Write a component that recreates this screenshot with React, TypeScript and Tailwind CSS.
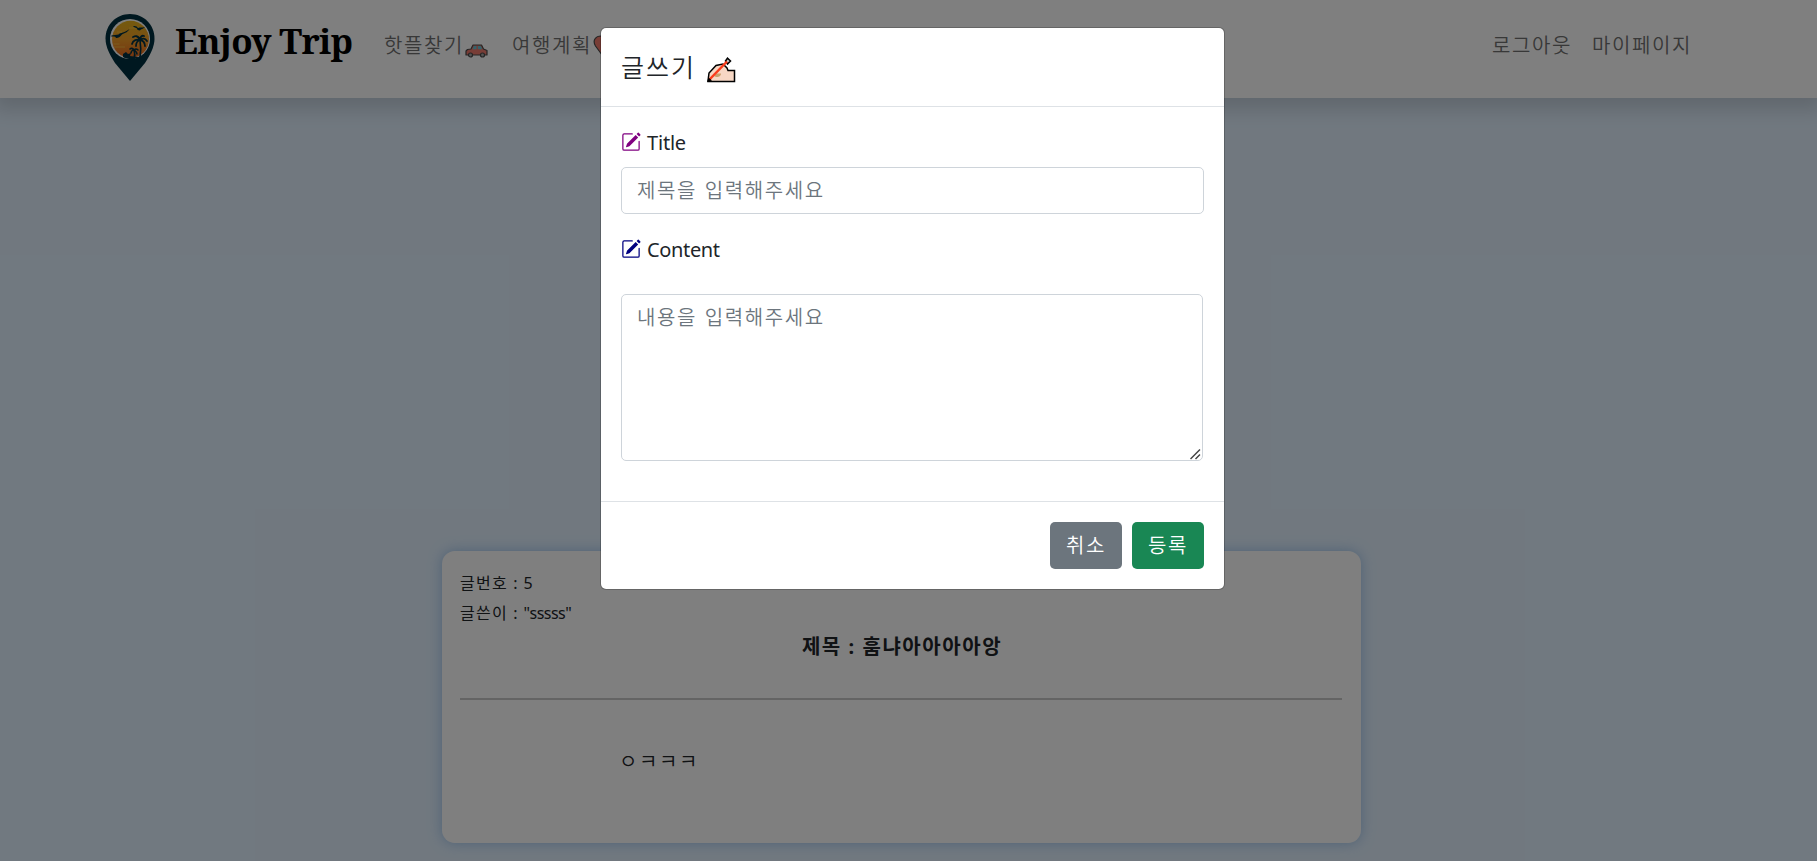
import React from "react";

const sans = "font-['Noto_Sans','Noto_Sans_CJK_KR',sans-serif]";

function Logo() {
  return (
    <svg width="50" height="67" viewBox="0 0 50 67" className="mt-[14px] shrink-0">
      <defs>
        <linearGradient id="sun" x1="0" y1="0" x2="0" y2="1">
          <stop offset="0" stopColor="#e8b41c" />
          <stop offset="0.5" stopColor="#f5a028" />
          <stop offset="1" stopColor="#ee6a20" />
        </linearGradient>
      </defs>
      <path d="M25 0C11 0 .5 11 .5 24.500C.5 33 5 41 10 49L25 67L40 49C45 41 49.500 33 49.500 24.500C49.500 11 39 0 25 0Z" fill="#003040" />
      <circle cx="25" cy="25" r="20" fill="#fff" />
      <circle cx="25.500" cy="25.300" r="18.500" fill="url(#sun)" />
      <path d="M9 33h11M8.500 30h6M24 14h12M12 18h5" stroke="#fbd34f" strokeWidth="1" opacity=".6" />
      <path d="M5.500 22c3-1.500 6-1 8-1.500c2-2 6-1.500 11-5.500c-2 4-6 4-8 6c-2 3-6 4-6 2c-2-1-3 0-5-1Z" fill="#003040" />
      <path d="M28 12.500c2-1 4 0 5 1.500c2-1 4 0 7-1c-2 2.500-4 1.500-5 3.500c-2 0-3-1-3-2c-1-1-3-1-4-2Z" fill="#003040" />
      <g fill="none" stroke="#003040" strokeLinecap="round">
        <path d="M35 26c1 6 1 12 0 18M29 36c1 3 1 6 0 9" strokeWidth="1.600" />
        <path d="M35 26c-2-5-5-4-7-3M35 26c-3-1-7 0-8 4M35 26c-3 1-4 4-4 6M35 26c0-3 2-5 4-4M35 26c2-2 5-2 7 1M35 26c3 0 5 3 5 6" strokeWidth="1.800" />
        <path d="M29 36c-1-2-3-2-4-1M29 36c-2 0-3 2-3 3M29 36c2-2 3-1 4 0M29 36c1 1 3 2 3 4" strokeWidth="1.600" />
      </g>
      <path d="M18 40l3-2l2 2l3-1l-1 3l8 1l3-1c-5 4-13 4-18 1Z" fill="#003040" />
    </svg>
  );
}

function Car() {
  return (
    <svg width="23" height="14" viewBox="0 0 23 14" className="mt-[9px] ml-[1px]">
      <path d="M1 7L2.500 5.500L6 5L8 1H16.500L18.500 5L22 6.500V11H1Z" fill="#f07a6c" stroke="#4a4a4a" strokeWidth="1.200" strokeLinejoin="round" />
      <path d="M7.500 5.300L9 2H11.500V5.300ZM12.800 2H15.800L17.300 5.300H12.800Z" fill="#6bc4d6" />
      <circle cx="5.500" cy="11" r="2" fill="#aaa" stroke="#4a4a4a" strokeWidth="1.200" />
      <circle cx="17.500" cy="11" r="2" fill="#aaa" stroke="#4a4a4a" strokeWidth="1.200" />
    </svg>
  );
}

function Pin() {
  return (
    <svg width="16" height="20" viewBox="0 0 16 20" className="-mt-[2px] ml-[1px]">
      <path d="M8 18.500L2.500 11C-1 5 3 1 8 1S17 5 13.500 11Z" fill="#f07a6c" stroke="#4a4a4a" strokeWidth="1.200" />
    </svg>
  );
}

function WritingHand() {
  return (
    <svg width="30" height="26" viewBox="0 0 30 26" className="mt-[5px] ml-[10px]">
      <path d="M2 24L3 16L10 8.500L17 7L21 11L22 13.500H28.500V24.500H2Z" fill="#f7d7c4" stroke="#000" strokeWidth="1.500" />
      <path d="M8 19l3-2.500h4c0 3-3 3.500-5 3.500Z" fill="#c9a06c" />
      <path d="M19.500 4L21.500 1.200L24.500 4L21.500 7Z" fill="#ccc" stroke="#000" strokeWidth="1.500" />
      <path d="M3 23L21 4.500" stroke="#fa3c1c" strokeWidth="2.500" />
      <path d="M1 25L2.500 20.500L6 23.500Z" fill="#000" />
    </svg>
  );
}

function PencilSquare({ className }: { className: string }) {
  return (
    <svg width="20" height="20" viewBox="0 0 16 16" fill="currentColor" className={className}>
      <path d="M15.502 1.940a.5.5 0 0 1 0 .706L14.459 3.690l-2-2L13.502.646a.5.5 0 0 1 .707 0l1.293 1.293zm-1.750 2.456-2-2L4.939 9.210a.5.5 0 0 0-.121.196l-.805 2.414a.25.25 0 0 0 .316.316l2.414-.805a.5.5 0 0 0 .196-.120l6.813-6.814z" />
      <path fillRule="evenodd" d="M1 13.500A1.500 1.500 0 0 0 2.500 15h11a1.500 1.500 0 0 0 1.500-1.500v-6a.5.5 0 0 0-1 0v6a.5.5 0 0 1-.5.5h-11a.5.5 0 0 1-.5-.5v-11a.5.5 0 0 1 .5-.5H9a.5.5 0 0 0 0-1H2.500A1.500 1.500 0 0 0 1 2.500z" />
    </svg>
  );
}

function Navbar() {
  return (
    <header className="relative flex h-[98px] items-start bg-white pr-[125px] pl-[105px] shadow-[0_6px_18px_6px_rgba(0,0,0,0.14)]">
      <Logo />
      <span className="mt-[17px] ml-[20px] w-[209px] font-['Noto_Serif','DejaVu_Serif_Condensed','DejaVu_Serif',serif] text-[35px] leading-[48px] font-bold tracking-[-0.700px] whitespace-nowrap text-black">
        Enjoy Trip
      </span>
      <nav className="mt-[31px] flex h-[30px] flex-1 items-center text-[20px] leading-[30px] font-[350] tracking-[1.600px] whitespace-nowrap text-[#707070]">
        <span className="flex w-[128px] items-center">핫플찾기<Car /></span>
        <span className="flex items-center">여행계획<Pin /></span>
        <span className="ml-auto">로그아웃</span>
        <span className="ml-[20px]">마이페이지</span>
      </nav>
    </header>
  );
}

function Post() {
  return (
    <article className="mt-[453px] ml-[442px] h-[292px] w-[919px] rounded-[13px] bg-white px-[18px] pt-[17px] text-[#212529] shadow-[0_0_13px_rgba(110,165,225,0.6)]">
      <div className="text-[16px] leading-[30px] tracking-[1.250px]">
        <p>글번호 <span className="tracking-[0.900px]">: 5</span></p>
        <p>글쓴이 <span className="tracking-[0.900px]">: </span><span className="tracking-[-0.550px]">"sssss"</span></p>
      </div>
      <h2 className="mt-[4px] ml-px text-center text-[20px] leading-[30px] font-bold tracking-[1.550px]">제목 : 훔냐아아아아앙</h2>
      <hr className="mt-[36px] mr-px h-[2px] border-0 bg-[#c8c8c8]" />
      <p className="mt-[47px] ml-[159px] text-[20px] leading-[30px] font-[350] tracking-[1.600px]">ㅇㅋㅋㅋ</p>
    </article>
  );
}

function WriteDialog() {
  return (
    <section role="dialog" className="h-[563px] w-[625px] rounded-[6px] border border-black/20 bg-white bg-clip-padding text-[20px] text-[#212529]">
      <header className="flex h-[79px] items-center border-b border-[#dee2e6] px-[20px]">
        <h5 className="text-[25px] leading-[38px] font-[350] tracking-[2px]">글쓰기</h5>
        <WritingHand />
      </header>
      <div className="h-[394px] px-[20px] pt-[20px]">
        <label className="flex h-[30px] items-center">
          <PencilSquare className="text-[#800080]" />
          <span className="mt-[2px] ml-[6px] tracking-[-0.200px]">Title</span>
        </label>
        <input className="mt-[10px] block h-[47px] w-full rounded-[5px] border border-[#ced4da] px-[15px] font-[350] tracking-[1.600px] [word-spacing:1px] outline-none placeholder:text-[#6c757d]" placeholder="제목을 입력해주세요" />
        <label className="mt-[20px] flex h-[30px] items-center">
          <PencilSquare className="text-[#000080]" />
          <span className="mt-[2px] ml-[6px] tracking-[-0.350px]">Content</span>
        </label>
        <div className="relative mt-[30px] w-[582px]">
          <textarea className="block h-[167px] w-full resize-none rounded-[5px] border border-[#ced4da] px-[15px] py-[8px] leading-[30px] font-[350] tracking-[1.600px] [word-spacing:1px] outline-none placeholder:text-[#6c757d]" placeholder="내용을 입력해주세요" />
          <svg width="11" height="11" viewBox="0 0 11 11" className="absolute right-[2px] bottom-[1px]">
            <path d="M.5 10L10 .5M5.500 10L10 5.500" stroke="#444" strokeWidth="1.500" />
          </svg>
        </div>
      </div>
      <footer className="flex h-[88px] justify-end gap-[10px] border-t border-[#dee2e6] px-[20px] pt-[20px] font-[350] tracking-[1.600px] text-white">
        <button className="h-[47px] w-[72px] rounded-[5px] bg-[#6c757d]">취소</button>
        <button className="h-[47px] w-[72px] rounded-[5px] bg-[#198754]">등록</button>
      </footer>
    </section>
  );
}

export default function App() {
  return (
    <div className={`relative h-[861px] overflow-hidden bg-[#e2f1ff] ${sans}`}>
      <Navbar />
      <Post />
      <div className="absolute inset-0 bg-black/50 pt-[27px] pl-[600px]">
        <WriteDialog />
      </div>
    </div>
  );
}
